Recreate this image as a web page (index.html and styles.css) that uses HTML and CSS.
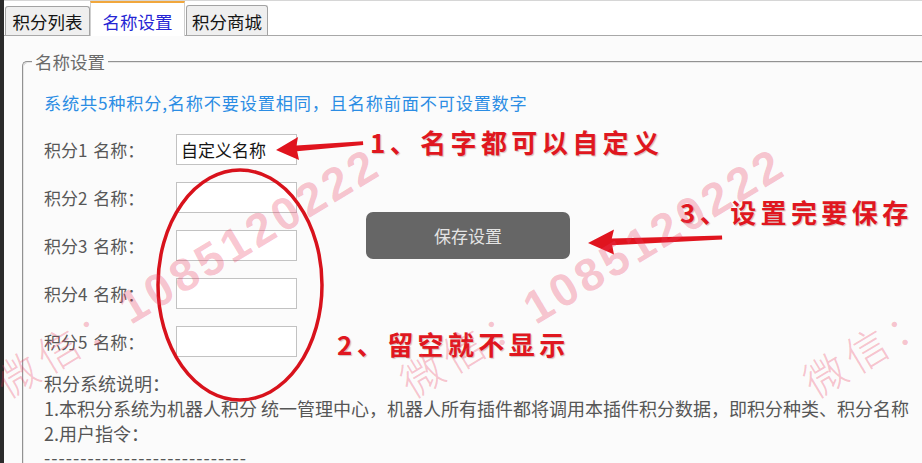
FILE: index.html
```html
<!DOCTYPE html>
<html lang="zh-CN">
<head>
<meta charset="utf-8">
<title>名称设置</title>
<link rel="stylesheet" href="styles.css">
</head>
<body>
<div class="screen">
  <div class="edge"></div>
  <div class="window">
    <div class="tabs">
      <div class="tab first">积分列表</div>
      <div class="tab active">名称设置</div>
      <div class="tab last">积分商城</div>
    </div>
    <div class="panel">
      <fieldset class="group">
        <legend>名称设置</legend>
        <p class="hint">系统共5种积分,名称不要设置相同，且名称前面不可设置数字</p>
        <div class="form-area">
          <div class="rows">
            <div class="row"><span class="label">积分1 名称：</span><div class="input">自定义名称</div></div>
            <div class="row"><span class="label">积分2 名称：</span><div class="input"></div></div>
            <div class="row"><span class="label">积分3 名称：</span><div class="input"></div></div>
            <div class="row"><span class="label">积分4 名称：</span><div class="input"></div></div>
            <div class="row"><span class="label">积分5 名称：</span><div class="input"></div></div>
          </div>
          <button class="save">保存设置</button>
        </div>
        <div class="notes">
          <p>积分系统说明：</p>
          <p>1.本积分系统为机器人积分 统一管理中心，机器人所有插件都将调用本插件积分数据，即积分种类、积分名称</p>
          <p>2.用户指令：</p>
          <p class="dash">----------------------------</p>
        </div>
      </fieldset>
    </div>
  </div>

  <svg class="marks" width="922" height="463" viewBox="0 0 922 463">
    <ellipse cx="240" cy="285" rx="82" ry="115" fill="none" stroke="#d8121c" stroke-width="3.5"/>
    <polygon fill="#e0141e" points="276,150 298,137 296.5,145.6 363,141.2 363.2,145 297.2,151.2 299,160"/>
    <polygon fill="#e0141e" points="588,243 614,229.5 611.8,238.6 722,235.4 722.2,239.6 612.2,245.2 614,254.5"/>
  </svg>

  <div class="ann ann1">1、名字都可以自定义</div>
  <div class="ann ann2">2、留空就不显示</div>
  <div class="ann ann3">3、设置完要保存</div>

  <div class="wm wm1"><span class="wm-cjk">微信：</span><span class="wm-num">1085120222</span></div>
  <div class="wm wm2"><span class="wm-cjk">微信：</span><span class="wm-num">1085120222</span></div>
  <div class="wm wm3"><span class="wm-cjk">微信：</span><span class="wm-num">1085120222</span></div>
</div>
</body>
</html>
```

FILE: styles.css
```css
html, body {
  margin: 0;
  padding: 0;
  background: #ffffff;
  overflow: hidden;
}

.screen {
  position: relative;
  display: flex;
  width: 922px;
  height: 463px;
  overflow: hidden;
  font-family: "Noto Sans CJK SC", "Noto Sans", sans-serif;
}

.edge {
  flex: none;
  width: 4px;
  background: #2b2b2b;
}

.window {
  flex: 1;
  display: flex;
  flex-direction: column;
  min-width: 0;
  background: #fbfbfb;
}

/* tabs */
.tabs {
  flex: none;
  height: 36px;
  box-sizing: border-box;
  display: flex;
  align-items: flex-end;
  padding-left: 1px;
  background: #ffffff;
  border-bottom: 1px solid #a8a8a8;
  border-top: 1px solid #d6d6d6;
}

.tab {
  box-sizing: border-box;
  height: 29px;
  padding-top: 1px;
  display: flex;
  align-items: center;
  justify-content: center;
  background: #efefef;
  border: 1px solid #a3a3a3;
  border-bottom: none;
  border-radius: 3px 3px 0 0;
  font-size: 17.5px;
  color: #141414;
  white-space: nowrap;
}

.tab.first {
  width: 85px;
}

.tab.active {
  width: 95px;
  height: 35px;
  margin-bottom: -1px;
  padding-top: 3px;
  background: #ffffff;
  border-color: #cfcfcf;
  border-top: 2px solid #f1a73c;
  border-radius: 0;
  color: #2626d4;
}

.tab.last {
  width: 82px;
  margin-left: 1px;
  height: 30px;
}

/* panel */
.panel {
  flex: 1;
  padding: 14px 0 0 18px;
  overflow: hidden;
}

.group {
  margin: 0;
  padding: 0 0 0 20px;
  min-width: 0;
  width: 960px;
  height: 520px;
  border: 2px groove #e6e6e6;
  border-right: none;
  border-bottom: none;
  border-radius: 5px 0 0 0;
}

.group legend {
  margin-left: -12px;
  padding: 0 3px;
  font-size: 17.5px;
  line-height: 24px;
  color: #6a6a6a;
}

.hint {
  margin: 17px 0 0 0;
  font-size: 17.2px;
  line-height: 24px;
  letter-spacing: 0.8px;
  color: #2b8de4;
  white-space: nowrap;
}

.form-area {
  display: flex;
  align-items: flex-start;
  margin-top: 19px;
}

.rows {
  display: flex;
  flex-direction: column;
  gap: 17px;
}

.row {
  display: flex;
  align-items: center;
  height: 31px;
}

.label {
  width: 132px;
  font-size: 17px;
  color: #575757;
  word-spacing: 2px;
  white-space: nowrap;
}

.input {
  box-sizing: border-box;
  width: 121px;
  height: 31px;
  padding-left: 4px;
  border: 1px solid #c2c2c2;
  background: #ffffff;
  font-size: 17px;
  line-height: 29px;
  color: #151515;
  white-space: nowrap;
}

.save {
  flex: none;
  width: 204px;
  height: 47px;
  margin: 78px 0 0 69px;
  border: none;
  border-radius: 7px;
  background: #666666;
  color: #e4e4e4;
  font-family: inherit;
  font-size: 17px;
}

.notes {
  margin-top: 14px;
  font-size: 18px;
  line-height: 25px;
  color: #565656;
  white-space: nowrap;
}

.notes p {
  margin: 0;
}

.notes .dash {
  letter-spacing: 1px;
  line-height: 22px;
}

/* annotations */
.marks {
  position: absolute;
  left: 0;
  top: 0;
  pointer-events: none;
}

.ann {
  position: absolute;
  font-size: 26px;
  font-weight: 700;
  line-height: 30px;
  letter-spacing: 4.4px;
  color: #e0171f;
  white-space: nowrap;
  text-shadow: 1px 1px 1px rgba(90, 0, 0, 0.25);
}

.ann1 { left: 370px; top: 127px; }
.ann2 { left: 337px; top: 329px; }
.ann3 { left: 680px; top: 197px; }

/* watermark */
.wm {
  position: absolute;
  top: 364px;
  height: 40px;
  line-height: 40px;
  white-space: nowrap;
  transform: rotate(-31deg);
  transform-origin: 0 50%;
  color: rgba(236, 60, 95, 0.3);
  pointer-events: none;
}

.wm1 { left: -2px; }
.wm2 { left: 403px; }
.wm3 { left: 806px; }

.wm-cjk {
  font-family: "Noto Sans CJK SC", sans-serif;
  font-weight: 300;
  font-size: 42px;
  letter-spacing: 6px;
}

.wm-num {
  font-family: "Liberation Sans", sans-serif;
  font-weight: 700;
  font-size: 46px;
  letter-spacing: 4px;
}
```
